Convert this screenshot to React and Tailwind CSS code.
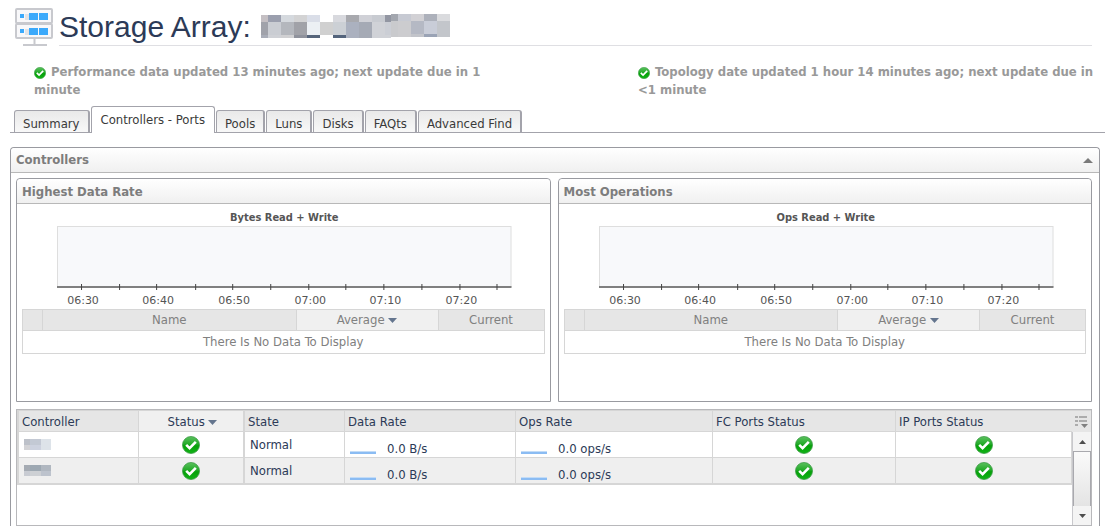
import { useState } from 'react';

const TABS = ['Summary', 'Controllers - Ports', 'Pools', 'Luns', 'Disks', 'FAQts', 'Advanced Find'];

const TICKS = [
  { pos: 24, label: '06:30' },
  { pos: 62 },
  { pos: 99, label: '06:40' },
  { pos: 138 },
  { pos: 175, label: '06:50' },
  { pos: 213 },
  { pos: 251, label: '07:00' },
  { pos: 288 },
  { pos: 326, label: '07:10' },
  { pos: 364 },
  { pos: 402, label: '07:20' },
  { pos: 439 },
];

const CONTROLLERS = [
  { id: 1, colors: ['#bdc1c9', '#c3c9d4', '#dde3e9', '#d3d3d6', '#cdd2df', '#dde3e9'], state: 'Normal', dataRate: '0.0 B/s', opsRate: '0.0 ops/s' },
  { id: 2, colors: ['#a5abb3', '#9da8b2', '#b0b7c0', '#c8cbd2', '#cdd0d4', '#bdc3cd'], state: 'Normal', dataRate: '0.0 B/s', opsRate: '0.0 ops/s' },
];

// x, width, then top / middle / bottom colours
const NAME_BLOCKS = [
  [0, 7, '#c4bfc3', '#a0a2aa', '#a9adb8'],
  [7, 13, '#9b9fae', '#cacdd3', '#cfd1d6'],
  [20, 13, '#d5d9de', '#b4b7bd', '#d0d0d2'],
  [33, 13, '#d3d3d4', '#a1a2a8', '#8f929c'],
  [46, 13, '#dadee8', '#ecf0f4', '#56657b'],
  [59, 13, '#ffffff', '#d0d0d0', '#ffffff'],
  [72, 13, '#d8d9de', '#ccd0d5', '#54647c'],
  [85, 13, '#a8a9ae', '#abb1bf', '#abb1bf'],
  [98, 13, '#d0d1d7', '#a5aab5', '#a5aab5'],
  [111, 13, '#c8cbd1', '#d0d2d7', '#d0d2d7'],
  [124, 6, '#9296a2', '#cbced5', '#d0d2d7'],
  [130, 7, '#a3a7af', '#c9cacd', '#c9cacd'],
  [137, 13, '#c7cad3', '#cccccf', '#cccccf'],
  [150, 13, '#d2d1d5', '#b5b9c4', '#c2c4ca'],
  [163, 13, '#adb1bb', '#c9cdd8', '#9aa3b5'],
  [176, 13, '#dadbde', '#c3c6cb', '#c3c6cb'],
];

function ServerIcon() {
  return (
    <svg width="40" height="40" viewBox="0 0 40 40" className="shrink-0" aria-hidden="true">
      {[2, 17].map((y) => (
        <g key={y}>
          <rect x="1" y={y} width="36" height="14" rx="1" fill="#f8f8fa" stroke="#c8c9ce" strokeWidth="2" />
          <rect x="10" y={y + 5} width="4" height="6" fill="#e2e3e6" />
          <rect x="5" y={y + 5} width="4" height="4" fill="#3ba9fb" />
          <rect x="14" y={y + 4} width="9" height="7" fill="#3ba9fb" />
          <rect x="24" y={y + 4} width="9" height="7" fill="#3ba9fb" />
        </g>
      ))}
      <path d="M19.500 32v6M8 38h24" stroke="#c8c9ce" strokeWidth="2" fill="none" />
    </svg>
  );
}

function CheckIcon({ className }) {
  return (
    <svg viewBox="0 0 18 18" className={className} role="img" aria-label="Normal">
      <defs>
        <linearGradient id="ok" x1="0" y1="0" x2="0" y2="1">
          <stop offset="0" stopColor="#5cc05f" />
          <stop offset="0.45" stopColor="#22ab28" />
          <stop offset="0.55" stopColor="#05a009" />
          <stop offset="1" stopColor="#12b317" />
        </linearGradient>
      </defs>
      <circle cx="9" cy="9" r="8.500" fill="url(#ok)" stroke="#3c9c46" strokeWidth="0.8" />
      <path d="M4.200 8.800l3.400 3.400 6.200-6.300" fill="none" stroke="#fff" strokeWidth="2.600" />
    </svg>
  );
}

function SortArrow() {
  return (
    <svg width="9" height="5" viewBox="0 0 9 5" className="inline-block align-middle" aria-hidden="true">
      <path d="M0 0h9L4.500 5z" fill="#64758e" />
    </svg>
  );
}

function MaskedTitle() {
  return (
    <svg width="189" height="25" viewBox="0 0 189 25" shapeRendering="crispEdges" role="img" aria-label="Hidden name">
      {NAME_BLOCKS.map(([x, w, top, mid, bottom]) => {
        const y = x >= 130 ? 0 : 1;
        return (
          <g key={x}>
            <rect x={x} y={y} width={w} height="7" fill={top} />
            <rect x={x} y={y + 7} width={w} height="13" fill={mid} />
            <rect x={x} y={y + 20} width={w} height="3" fill={bottom} />
          </g>
        );
      })}
    </svg>
  );
}

function MaskedName({ colors }) {
  return (
    <svg width="28" height="11" viewBox="0 0 28 11" shapeRendering="crispEdges" role="img" aria-label="Hidden name">
      {colors.map((color, i) => (
        <rect key={i} x={[0, 6, 17][i % 3]} y={i < 3 ? 0 : 6} width={[6, 11, 10][i % 3]} height={i < 3 ? 6 : 5} fill={color} />
      ))}
    </svg>
  );
}

function UpdateStatus({ children }) {
  return (
    <p className="text-[13px] leading-[18px] font-bold text-[#999]">
      <CheckIcon className="mr-[5px] inline-block h-3 w-3 align-[-3px]" />
      {children}
    </p>
  );
}

function TimeChart({ title }) {
  return (
    <figure className="pt-2 pr-[38px] pl-10">
      <figcaption className="text-center text-[11px] leading-3 font-bold text-[#555]">{title}</figcaption>
      <svg className="mt-[2px] block h-[83px] w-full overflow-visible" aria-hidden="true">
        <rect x="0" y="0" width="100%" height="61" fill="#dedede" />
        <svg width="100%" height="61" viewBox="0 0 454 61" preserveAspectRatio="none">
          <rect x="1" y="1" width="452" height="60" fill="#f8f9fb" />
        </svg>
        <rect x="0" y="60" width="100%" height="2" fill="#808080" />
        {TICKS.map(({ pos, label }) => (
          <g key={pos}>
            <rect x={`${pos / 4.54}%`} y="58" width="1" height="6" fill="#444" />
            {label && (
              <text
                x={`${(pos + 2) / 4.54}%`}
                y="78"
                textAnchor="middle"
                fill="#555"
                className="font-['DejaVu_Sans',sans-serif] text-[11px]"
              >
                {label}
              </text>
            )}
          </g>
        ))}
      </svg>
    </figure>
  );
}

function RatePanel({ heading, chartTitle }) {
  return (
    <section className="h-56 rounded-t border border-[#999aa0]">
      <h3 className="h-[25px] rounded-t border-b border-[#b8b8b8] bg-linear-to-b from-white to-[#f0f0f0] pl-[5px] text-[13px] leading-[25px] font-bold text-[#7d7d7d]">
        {heading}
      </h3>
      <TimeChart title={chartTitle} />
      <div className="px-[5px]">
        <table className="w-full table-fixed border-collapse border border-[#d6d6d6] text-center text-[13px] text-[#808080]">
          <colgroup>
            <col className="w-5" />
            <col />
            <col className="w-[142px]" />
            <col className="w-[106px]" />
          </colgroup>
          <thead>
            <tr className="h-[21px] bg-[#e6e6e6]">
              <th className="border border-[#d6d6d6]" aria-label="Colour" />
              <th className="border border-[#d6d6d6] font-normal leading-5">Name</th>
              <th className="border border-[#d6d6d6] bg-[#f0f0f0] font-normal leading-5" aria-sort="descending">
                Average <SortArrow />
              </th>
              <th className="border border-[#d6d6d6] font-normal leading-5">Current</th>
            </tr>
          </thead>
          <tbody>
            <tr className="h-[23px]">
              <td colSpan={4} className="leading-5">There Is No Data To Display</td>
            </tr>
          </tbody>
        </table>
      </div>
    </section>
  );
}

function Rate({ value }) {
  return (
    <div className="flex items-center pt-[9px] pl-[5px] leading-4">
      <svg width="26" height="3" viewBox="0 0 26 3" className="mt-[6px] mr-[11px] shrink-0" aria-hidden="true">
        <rect width="26" height="1" fill="#c3dcf7" />
        <rect y="1" width="26" height="2" fill="#8bbcf3" />
      </svg>
      {value}
    </div>
  );
}

function ControllerTable() {
  return (
    <div className="mt-[7px] flex border border-[#b8b8bb] text-[13px] text-[#2c3a57]">
      <table className="w-full table-fixed border-separate border-spacing-0 self-start border-t border-[#d6d6d6]">
        <colgroup>
          <col className="w-[122px]" />
          <col className="w-[106px]" />
          <col className="w-[100px]" />
          <col className="w-[171px]" />
          <col className="w-[197px]" />
          <col className="w-[183px]" />
          <col className="w-[176px]" />
        </colgroup>
        <thead>
          <tr className="h-[21px] bg-[#e6e6e6] text-left leading-[18px] [&>th]:border-b [&>th]:border-[#d6d6d6] [&>th]:p-0 [&>th]:pt-[2px] [&>th]:pl-[3px] [&>th]:font-normal">
            <th className="border-r border-l-2">Controller</th>
            <th className="border-r-2 bg-[#f0f0f0] text-center" aria-sort="descending">
              Status <SortArrow />
            </th>
            <th className="border-r">State</th>
            <th className="border-r">Data Rate</th>
            <th className="border-r">Ops Rate</th>
            <th className="border-r">FC Ports Status</th>
            <th>IP Ports Status</th>
          </tr>
        </thead>
        <tbody>
          {CONTROLLERS.map((row) => (
            <tr
              key={row.id}
              className="h-[26px] even:bg-[#efefef] [&>td]:border-b [&>td]:border-[#d6d6d6] [&>td]:p-0 last:[&>td]:border-b-2"
            >
              <td className="border-r border-l-2">
                <div className="pl-[5px]">
                  <MaskedName colors={row.colors} />
                </div>
              </td>
              <td className="border-r-2">
                <CheckIcon className="mx-auto h-[18px] w-[18px]" />
              </td>
              <td className="border-r">
                <div className="pl-[5px] leading-5">{row.state}</div>
              </td>
              <td className="border-r"><Rate value={row.dataRate} /></td>
              <td className="border-r"><Rate value={row.opsRate} /></td>
              <td className="border-r">
                <CheckIcon className="mx-auto h-[18px] w-[18px]" />
              </td>
              <td className="border-r">
                <CheckIcon className="mx-auto h-[18px] w-[18px]" />
              </td>
            </tr>
          ))}
        </tbody>
      </table>
      <div className="flex h-[115px] w-[19px] shrink-0 flex-col">
        <button type="button" aria-label="Choose columns" className="flex h-[22px] items-center justify-center border-t border-[#d6d6d6] bg-[#e6e6e6]">
          <svg width="13" height="12" viewBox="0 0 13 12" aria-hidden="true">
            <path d="M0 1h3M4 1h8M0 5h3M4 5h8M0 9h3" stroke="#999" strokeWidth="1.500" />
            <path d="M6 8h7l-3.500 4z" fill="#808080" />
          </svg>
        </button>
        <div className="flex flex-1 flex-col border-l border-[#c8c8cc] bg-[#f4f4f4]">
          <button type="button" aria-label="Scroll up" className="flex h-[19px] items-center justify-center">
            <svg width="7" height="4" viewBox="0 0 7 4" aria-hidden="true">
              <path d="M0 4h7L3.500 0z" fill="#4d4d4d" />
            </svg>
          </button>
          <div className="flex-1 border border-b-0 border-[#a9a9ae] bg-linear-to-b from-[#fafafa] to-[#e4e4e4]" />
          <button type="button" aria-label="Scroll down" className="flex h-[19px] items-center justify-center">
            <svg width="7" height="4" viewBox="0 0 7 4" aria-hidden="true">
              <path d="M0 0h7L3.500 4z" fill="#4d4d4d" />
            </svg>
          </button>
        </div>
      </div>
    </div>
  );
}

function App() {
  const [activeTab, setActiveTab] = useState('Controllers - Ports');
  const [open, setOpen] = useState(true);

  return (
    <main className="bg-white font-['Tahoma','DejaVu_Sans_Condensed','DejaVu_Sans',sans-serif]">
      <header className="flex items-start gap-1 pt-[7px] pr-[13px] pl-[15px]">
        <ServerIcon />
        <div className="flex h-[39px] flex-1 items-center gap-[10px] border-b border-[#dfdfe3]">
          <h1 className="pt-[2px] font-['Liberation_Sans',sans-serif] text-[30px] leading-9 text-[#2c3a57]">Storage Array:</h1>
          <MaskedTitle />
        </div>
      </header>

      <div className="grid grid-cols-2 gap-[142px] pt-4 pr-[5px] pl-[34px]">
        <UpdateStatus>Performance data updated 13 minutes ago; next update due in 1 minute</UpdateStatus>
        <UpdateStatus>Topology date updated 1 hour 14 minutes ago; next update due in &lt;1 minute</UpdateStatus>
      </div>

      <nav className="mt-[7px] ml-[10px] flex items-end gap-px border-b border-[#a3a3ab] pl-1">
        {TABS.map((tab) => (
          <button
            key={tab}
            type="button"
            onClick={() => setActiveTab(tab)}
            className={`rounded-t-[3px] border border-b-0 border-[#a3a3ab] text-[13px] text-[#3a3a3a] ${
              tab === activeTab
                ? '-mb-px h-[27px] bg-white px-[9px]'
                : 'h-[22px] border-r-2 bg-linear-to-b from-[#e9e9e9] to-[#f8f8f8] px-2 pt-[3px]'
            }`}
          >
            {tab}
          </button>
        ))}
      </nav>

      <section className="mt-[14px] mr-[5px] ml-[10px] rounded-t border border-b-0 border-[#999aa0]">
        <div className="flex h-[25px] items-center justify-between rounded-t border-b border-[#b8b8b8] bg-linear-to-b from-white to-[#f0f0f0] pr-[6px] pl-[5px]">
          <h2 className="text-[13px] font-bold text-[#7d7d7d]">Controllers</h2>
          <button type="button" aria-label="Collapse" aria-expanded={open} onClick={() => setOpen(!open)}>
            <svg width="10" height="5" viewBox="0 0 10 5" aria-hidden="true">
              <path d="M0 5h10L5 0z" fill="#7a7a7a" />
            </svg>
          </button>
        </div>
        {open && (
          <div className="pt-[5px] pr-[7px] pl-[5px]">
            <div className="grid grid-cols-2 gap-[7px]">
              <RatePanel heading="Highest Data Rate" chartTitle="Bytes Read + Write" />
              <RatePanel heading="Most Operations" chartTitle="Ops Read + Write" />
            </div>
            <ControllerTable />
          </div>
        )}
      </section>
    </main>
  );
}

export default App;
